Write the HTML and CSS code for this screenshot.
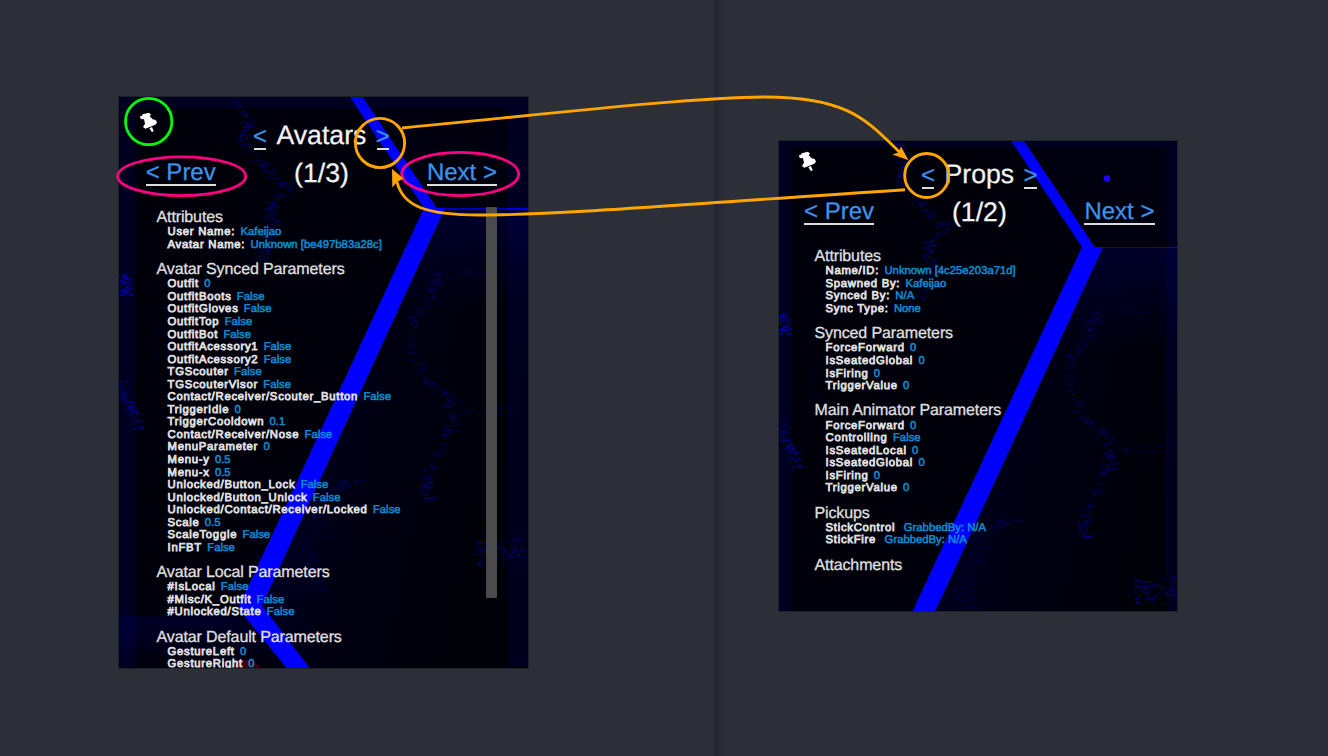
FILE: index.html
```html
<!DOCTYPE html>
<html lang="en">
<head>
<meta charset="utf-8">
<title>Avatars and Props debugger</title>
<link rel="stylesheet" href="styles.css">
</head>
<body>
<svg class="defs" aria-hidden="true">
  <defs>
    <linearGradient id="glow" x1="0" y1="0" x2="1" y2="0.35">
      <stop offset="0" stop-color="#000036"/>
      <stop offset="0.5" stop-color="#000012"/>
      <stop offset="1" stop-color="#000008"/>
    </linearGradient>
    <linearGradient id="fade" x1="0" y1="0" x2="0" y2="1">
      <stop offset="0" stop-color="#0000a0" stop-opacity="0.2"/>
      <stop offset="1" stop-color="#0000a0" stop-opacity="0"/>
    </linearGradient>
    <g id="art">
      <path d="M363 97H530V208H437Z" fill="#00000e"/>
      <path d="M445 208H530V670H310L262 605Z" fill="url(#glow)"/>
      <path d="M445 209H530V310H400Z" fill="url(#fade)"/>
      <path d="M119 616H240L287 668H119Z" fill="url(#fade)"/>
      <g id="static" fill="none" stroke="#0000c8" stroke-width="0.8"></g>
      <path d="M440 208.5H530" stroke="#0000c0" stroke-width="1"/>
      <path d="M350 97H362.7L436.7 208H445L262 605L310 668H287L238 608L424 208Z" fill="#0000ff"/>
    </g>
    <symbol id="pin" viewBox="88 66 56 62">
      <path d="M91 79L97 77L99 73L118 68L124 74L120 79L129 88L138 90L142 98L137 104L107 116L100 111L106 101L103 88L93 87Z" fill="#fff"/>
      <path d="M119 115L127 111L132 123L127 127Z" fill="#fff"/>
    </symbol>
  </defs>
</svg>

<main class="stage">
  <section class="panel panel-avatars">
    <svg class="backdrop" viewBox="119 97 409 570" preserveAspectRatio="none">
      <use href="#art"/>
      <path d="M119 97H528V108H135V667H119Z" fill="#0000a0" opacity="0.15"/>
      <path d="M508 108H528V667H508Z" fill="#0000a0" opacity="0.15"/>
      <path d="M508 208.5H528" stroke="#0000ff"/>
      <path d="M229 667Q241 652 262 667Z" fill="#600018" opacity="0.7"/>
    </svg>
    <svg class="pin"><use href="#pin"/></svg>
    <header class="head">
      <a class="nav">&lt; Prev</a>
      <div class="title">
        <h1><a class="arrow">&lt;</a><span>Avatars</span><a class="arrow">&gt;</a></h1>
        <p>(1/3)</p>
      </div>
      <a class="nav">Next &gt;</a>
    </header>
    <div class="list">
      <h2>Attributes</h2>
      <ul>
        <li><b>User Name:</b><i>Kafeijao</i></li>
        <li><b>Avatar Name:</b><i>Unknown [be497b83a28c]</i></li>
      </ul>
      <h2>Avatar Synced Parameters</h2>
      <ul>
        <li><b>Outfit</b><i>0</i></li>
        <li><b>OutfitBoots</b><i>False</i></li>
        <li><b>OutfitGloves</b><i>False</i></li>
        <li><b>OutfitTop</b><i>False</i></li>
        <li><b>OutfitBot</b><i>False</i></li>
        <li><b>OutfitAcessory1</b><i>False</i></li>
        <li><b>OutfitAcessory2</b><i>False</i></li>
        <li><b>TGScouter</b><i>False</i></li>
        <li><b>TGScouterVisor</b><i>False</i></li>
        <li><b>Contact/Receiver/Scouter_Button</b><i>False</i></li>
        <li><b>TriggerIdle</b><i>0</i></li>
        <li><b>TriggerCooldown</b><i>0.1</i></li>
        <li><b>Contact/Receiver/Nose</b><i>False</i></li>
        <li><b>MenuParameter</b><i>0</i></li>
        <li><b>Menu-y</b><i>0.5</i></li>
        <li><b>Menu-x</b><i>0.5</i></li>
        <li><b>Unlocked/Button_Lock</b><i>False</i></li>
        <li><b>Unlocked/Button_Unlock</b><i>False</i></li>
        <li><b>Unlocked/Contact/Receiver/Locked</b><i>False</i></li>
        <li><b>Scale</b><i>0.5</i></li>
        <li><b>ScaleToggle</b><i>False</i></li>
        <li><b>InFBT</b><i>False</i></li>
      </ul>
      <h2>Avatar Local Parameters</h2>
      <ul>
        <li><b>#IsLocal</b><i>False</i></li>
        <li><b>#Misc/K_Outfit</b><i>False</i></li>
        <li><b>#Unlocked/State</b><i>False</i></li>
      </ul>
      <h2>Avatar Default Parameters</h2>
      <ul>
        <li><b>GestureLeft</b><i>0</i></li>
        <li><b>GestureRight</b><i>0</i></li>
      </ul>
    </div>
    <div class="scrollbar"></div>
  </section>

  <section class="panel panel-props">
    <svg class="backdrop" viewBox="121 102 398 470" preserveAspectRatio="none">
      <use href="#art"/>
      <path d="M121 102H519V108.5H134V572H121Z" fill="#0000a0" opacity="0.15"/>
      <path d="M508 108.5H519V572H508Z" fill="#0000a0" opacity="0.15"/>
      <path d="M508 208.5H519" stroke="#0000ff"/>
      <circle cx="449" cy="139.5" r="3.2" fill="#2000ff"/>
    </svg>
    <svg class="pin"><use href="#pin"/></svg>
    <header class="head">
      <a class="nav">&lt; Prev</a>
      <div class="title">
        <h1><a class="arrow">&lt;</a><span>Props</span><a class="arrow">&gt;</a></h1>
        <p>(1/2)</p>
      </div>
      <a class="nav">Next &gt;</a>
    </header>
    <div class="list">
      <h2>Attributes</h2>
      <ul>
        <li><b>Name/ID:</b><i>Unknown [4c25e203a71d]</i></li>
        <li><b>Spawned By:</b><i>Kafeijao</i></li>
        <li><b>Synced By:</b><i>N/A</i></li>
        <li><b>Sync Type:</b><i>None</i></li>
      </ul>
      <h2>Synced Parameters</h2>
      <ul>
        <li><b>ForceForward</b><i>0</i></li>
        <li><b>IsSeatedGlobal</b><i>0</i></li>
        <li><b>IsFiring</b><i>0</i></li>
        <li><b>TriggerValue</b><i>0</i></li>
      </ul>
      <h2>Main Animator Parameters</h2>
      <ul>
        <li><b>ForceForward</b><i>0</i></li>
        <li><b>Controlling</b><i>False</i></li>
        <li><b>IsSeatedLocal</b><i>0</i></li>
        <li><b>IsSeatedGlobal</b><i>0</i></li>
        <li><b>IsFiring</b><i>0</i></li>
        <li><b>TriggerValue</b><i>0</i></li>
      </ul>
      <h2>Pickups</h2>
      <ul class="wide">
        <li><b>StickControl</b><i>GrabbedBy: N/A</i></li>
        <li><b>StickFire</b><i>GrabbedBy: N/A</i></li>
      </ul>
      <h2>Attachments</h2>
    </div>
  </section>

  <svg class="notes" viewBox="0 0 1328 756" fill="none">
    <circle cx="148.7" cy="121.5" r="23.2" stroke="#00ff00" stroke-width="2.8"/>
    <g stroke="#ff0080" stroke-width="2.8">
      <ellipse cx="181.7" cy="176.2" rx="64" ry="19.4"/>
      <ellipse cx="460.2" cy="174" rx="58.5" ry="21.6"/>
    </g>
    <g stroke="#ffa500" stroke-width="2.9">
      <circle cx="380" cy="143" r="24.6"/>
      <circle cx="926.7" cy="175.5" r="22"/>
      <path d="M402 128C520 117 690 97 765 97C850 97 868 122 900 152.500"/>
      <path d="M905 189.700C700 203 560 215 480 215C425 215 403 206 397 182"/>
    </g>
    <g fill="#ffa500">
      <path d="M908.500 160.300L892.500 154.500L898.500 152.500L901 146.500Z"/>
      <path d="M392 169L403.500 178.500L397 182L392.300 187.500Z"/>
    </g>
  </svg>
</main>
<script src="backdrop.js"></script>
</body>
</html>
```
FILE: styles.css
```css
* { box-sizing: border-box; margin: 0; padding: 0; }

body {
  width: 1328px;
  height: 756px;
  overflow: hidden;
  font-family: "Liberation Sans", Arial, sans-serif;
  text-rendering: geometricPrecision;
  background: #2c2f37;
}

.defs { position: absolute; width: 0; height: 0; }

.stage {
  position: relative;
  display: flex;
  align-items: flex-start;
  gap: 251px;
  height: 756px;
  padding: 97px 0 0 119px;
  background: linear-gradient(90deg, transparent 713px, #23262e 715px, #262931 717px, #2b2e36 727px, transparent 729px);
}

.panel {
  position: relative;
  flex: none;
  overflow: hidden;
  background: #00000b;
  outline: 1px solid #1d2026;
}

.panel-avatars { width: 409px; height: 570.5px; padding-top: 19.3px; }
.panel-props { width: 398px; height: 470px; margin-top: 44px; padding-top: 14.3px; }

.backdrop { position: absolute; top: 0; left: 0; width: 100%; height: 100%; }

.pin { position: absolute; width: 18.700px; height: 20.700px; }
.panel-avatars .pin { left: 20.3px; top: 15px; }
.panel-props .pin { left: 18.9px; top: 10px; }

.head {
  position: relative;
  display: flex;
  justify-content: space-between;
  align-items: flex-end;
  height: 74.8px;
}
.panel-avatars .head { padding: 0 30.800px 0 26.700px; }
.panel-props .head { padding: 0 22.300px 0 25px; }

.nav, .arrow {
  font-size: 24px;
  color: #3d94ea;
  border-bottom: 2.3px solid #dcdcdc;
  white-space: nowrap;
  -webkit-text-stroke: 0.25px #3d94ea;
}
.nav { width: 70.3px; padding-top: 2px; line-height: 21.9px; margin-bottom: 4.8px; }
.arrow { width: 12.5px; line-height: 20.5px; text-indent: -0.8px; }

.title {
  flex: 1;
  padding-top: 1px;
  font-size: 26.7px;
  line-height: 37.4px;
  color: #f2f2f2;
  text-align: center;
  -webkit-text-stroke: 0.25px #f2f2f2;
}
.title p { height: 36.4px; }
.title h1 {
  display: flex;
  justify-content: center;
  align-items: baseline;
  gap: 10.2px;
  height: 37.4px;
  font-size: 26.7px;
  font-weight: normal;
}

.list { position: relative; padding-top: 18.1px; }
.panel-avatars .list { padding-left: 37.5px; }
.panel-props .list { padding-left: 35.5px; }

.list h2 {
  font-size: 16px;
  font-weight: normal;
  letter-spacing: -0.12px;
  line-height: 17.2px;
  color: #dedede;
  -webkit-text-stroke: 0.35px #dedede;
}
.list ul { list-style: none; padding-left: 11px; margin-bottom: 9.7px; }
.list li {
  display: flex;
  gap: 5.3px;
  height: 12.55px;
  font-size: 11.3px;
  line-height: 12.55px;
  white-space: nowrap;
}
.list .wide li { gap: 8.5px; }
.list b {
  font-weight: normal;
  letter-spacing: 0.74px;
  color: #dedede;
  -webkit-text-stroke: 0.85px #dedede;
}
.list i {
  font-style: normal;
  color: #0a8fd6;
  -webkit-text-stroke: 0.5px #0a8fd6;
}

.scrollbar {
  position: absolute;
  top: 109.5px;
  right: 31px;
  width: 10.700px;
  height: 391.5px;
  border-radius: 1px;
  background: #4b4b4b;
}

.notes { position: absolute; inset: 0; width: 1328px; height: 756px; }
```
FILE: backdrop.js
```javascript
// Scatters short horizontal dashes along polylines for the static trails.
const trails = [
  { pts: [[232,97],[248,122],[240,138],[262,165],[284,188],[268,210],[272,232],[258,262]], spread: 10, n: 260, o: 0.4 },
  { pts: [[438,272],[430,298],[412,318],[409,345],[424,378],[450,398],[452,420],[443,440],[431,465],[425,485],[428,501]], spread: 9, n: 330, o: 0.38 },
  { pts: [[122,274],[125,296]], spread: 8, n: 60, o: 0.85 },
  { pts: [[120,380],[126,402],[134,414],[140,430]], spread: 8, n: 80, o: 0.6 },
  { pts: [[153,325],[154,365]], spread: 6, n: 25, o: 0.2 },
  { pts: [[355,480],[330,490],[318,520],[310,560],[320,590]], spread: 16, n: 140, o: 0.28 },
  { pts: [[475,552],[522,552]], spread: 18, n: 75, o: 0.6 },
  { pts: [[455,408],[510,410]], spread: 8, n: 30, o: 0.35 },
  { pts: [[255,558],[270,564]], spread: 8, n: 25, o: 0.3 },
  { pts: [[460,272],[484,273]], spread: 2, n: 8, o: 0.35 }
];
let seed = 7;
function rnd() {
  seed = (seed + 0x6d2b79f5) | 0;
  let t = Math.imul(seed ^ (seed >>> 15), 1 | seed);
  t = (t + Math.imul(t ^ (t >>> 7), 61 | t)) ^ t;
  return ((t ^ (t >>> 14)) >>> 0) / 4294967296;
}
const group = document.getElementById("static");
for (const t of trails) {
  let d = "";
  for (let k = 0; k < t.n; k++) {
    const f = rnd() * (t.pts.length - 1), i = Math.floor(f), u = f - i;
    const [a, b] = [t.pts[i], t.pts[i + 1]];
    const flat = Math.abs(b[1] - a[1]) < 10;
    const off = (rnd() + rnd() - 1) * t.spread;
    const x = a[0] + (b[0] - a[0]) * u + (flat ? 0 : off);
    const y = a[1] + (b[1] - a[1]) * u + (flat ? off : 0);
    d += `M${x.toFixed(1)} ${y.toFixed(1)}l${(1 + rnd() * 4).toFixed(1)} ${(rnd() - 0.5).toFixed(1)}`;
  }
  const p = document.createElementNS("http://www.w3.org/2000/svg", "path");
  p.setAttribute("d", d);
  p.setAttribute("opacity", t.o);
  group.appendChild(p);
}
```
